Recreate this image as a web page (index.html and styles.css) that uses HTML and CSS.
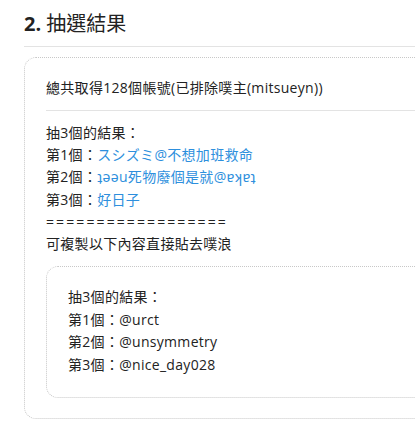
FILE: index.html
```html
<!DOCTYPE html>
<html lang="zh-Hant">
<head>
    <meta charset="UTF-8">
    <title>抽選結果</title>
    <link rel="stylesheet" href="styles.css">
</head>
<body>
    <div class="page">
        <h2 class="title"><b>2.</b> 抽選結果</h2>
        <div class="result">
            <p class="total">總共取得128個帳號(已排除噗主(mitsueyn))</p>
            <hr class="sep">
            <div class="lines">
                <div>抽3個的結果：</div>
                <div>第1個：<span class="name">スシズミ@不想加班救命</span></div>
                <div>第2個：<span class="name">ʇǝǝu死物廢個是就@ɐʞɐʇ</span></div>
                <div>第3個：<span class="name">好日子</span></div>
                <div class="rule">==================</div>
                <div>可複製以下內容直接貼去噗浪</div>
            </div>
            <div class="copy">
                <div>抽3個的結果：</div>
                <div>第1個：@urct</div>
                <div>第2個：@unsymmetry</div>
                <div>第3個：@nice_day028</div>
            </div>
        </div>
    </div>
</body>
</html>
```
FILE: styles.css
```css
body{
    margin: 0;
    overflow: hidden;
    background-color: #fff;
    color: #222;
    font-family: "Open Sans", "Noto Sans", "Noto Sans CJK TC", sans-serif;
    font-size: 14px;
}
.page{
    width: 640px;
    padding-left: 24px;
}
.title{
    margin: 0;
    padding-top: 10px;
    padding-bottom: 8px;
    font-size: 20px;
    line-height: 28px;
    font-weight: normal;
    border-bottom: 1px solid #e3e3e3;
}
.title b{
    font-weight: bold;
}
.result{
    margin-top: 10px;
    border: 1px dotted #c8c8c8;
    border-radius: 12px;
    padding: 19px 0 20px 21px;
    letter-spacing: 0.3px;
}
.total{
    margin: 0;
    line-height: 22px;
}
.sep{
    margin: 11px 0 11px 0;
    border: none;
    border-top: 1px solid #e3e3e3;
}
.lines{
    line-height: 22.2px;
}
.name{
    color: #2d8fdd;
}
.rule{
    letter-spacing: 2.1px;
}
.copy{
    margin-top: 11px;
    border: 1px dotted #c8c8c8;
    border-radius: 12px;
    padding: 19px 0 20px 21px;
    line-height: 22.6px;
}
```
